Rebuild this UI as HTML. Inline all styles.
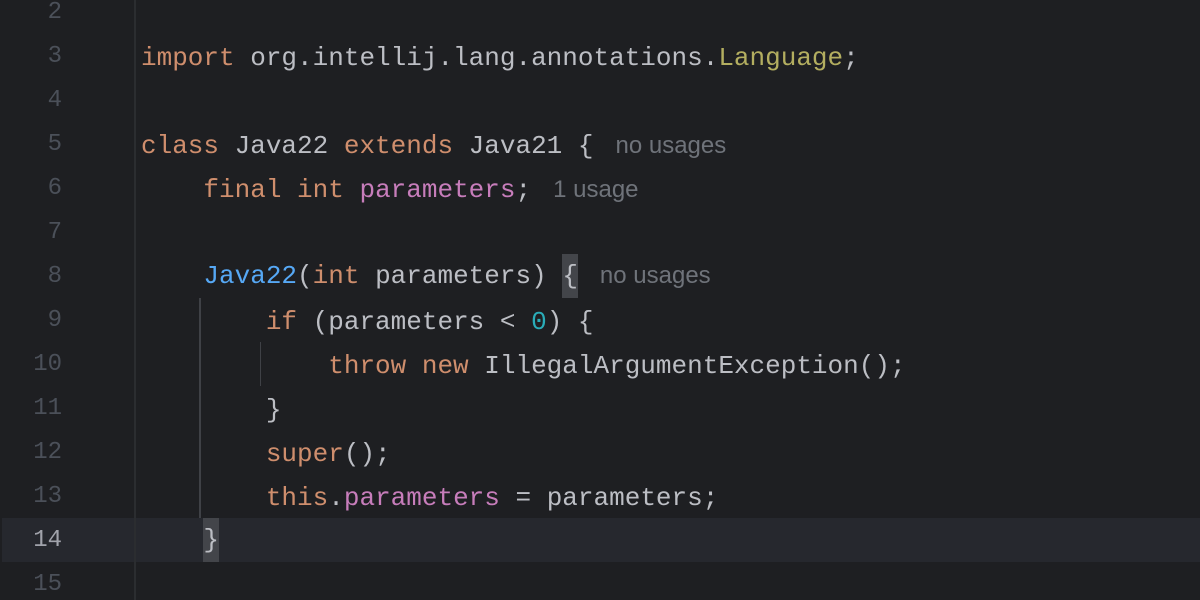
<!DOCTYPE html>
<html><head><meta charset="utf-8"><style>
html,body{margin:0;padding:0;background:#1e1f22;width:1200px;height:600px;overflow:hidden;position:relative}
.ln{position:absolute;left:0;width:62px;text-align:right;font:24px "Liberation Mono",monospace;color:#4b5059;height:44px;line-height:44px}
.code{position:absolute;left:141px;font:26px "Liberation Mono",monospace;color:#bcbec4;height:44px;line-height:44px;white-space:pre}
.k{color:#cf8e6d}.p{color:#c77dbb}.f{color:#56a8f5}.n{color:#2aacb8}.y{color:#b3ae60}
.h{font:24px "Liberation Sans",sans-serif;color:#6f737a;margin-left:22px}
.br{background:#43454a;display:inline-block;height:44px;vertical-align:top}
</style></head><body>
<div style="position:absolute;left:2px;top:518px;width:1198px;height:44px;background:#26282e"></div>
<div style="position:absolute;left:134px;top:0;width:2px;height:600px;background:#2b2d30"></div>
<div style="position:absolute;left:199px;top:298px;width:2px;height:220px;background:#3f4146"></div>
<div style="position:absolute;left:260px;top:342px;width:1px;height:44px;background:#3f4146"></div>
<div class="ln" style="top:-9px">2</div>
<div class="ln" style="top:35px">3</div>
<div class="ln" style="top:79px">4</div>
<div class="ln" style="top:123px">5</div>
<div class="ln" style="top:167px">6</div>
<div class="ln" style="top:211px">7</div>
<div class="ln" style="top:255px">8</div>
<div class="ln" style="top:299px">9</div>
<div class="ln" style="top:343px">10</div>
<div class="ln" style="top:387px">11</div>
<div class="ln" style="top:431px">12</div>
<div class="ln" style="top:475px">13</div>
<div class="ln" style="top:519px;color:#a1a3ab">14</div>
<div class="ln" style="top:563px">15</div>
<div class="code" style="top:36px"><span class="k">import</span> org.intellij.lang.annotations.<span class="y">Language</span>;</div>
<div class="code" style="top:124px"><span class="k">class</span> Java22 <span class="k">extends</span> Java21 {<span class="h">no usages</span></div>
<div class="code" style="top:168px">    <span class="k">final int</span> <span class="p">parameters</span>;<span class="h">1 usage</span></div>
<div class="code" style="top:254px">    <span class="f">Java22</span>(<span class="k">int</span> parameters) <span class="br">{</span><span class="h">no usages</span></div>
<div class="code" style="top:300px">        <span class="k">if</span> (parameters &lt; <span class="n">0</span>) {</div>
<div class="code" style="top:344px">            <span class="k">throw new</span> IllegalArgumentException();</div>
<div class="code" style="top:388px">        }</div>
<div class="code" style="top:432px">        <span class="k">super</span>();</div>
<div class="code" style="top:476px">        <span class="k">this</span>.<span class="p">parameters</span> = parameters;</div>
<div class="code" style="top:518px">    <span class="br">}</span></div>
</body></html>
